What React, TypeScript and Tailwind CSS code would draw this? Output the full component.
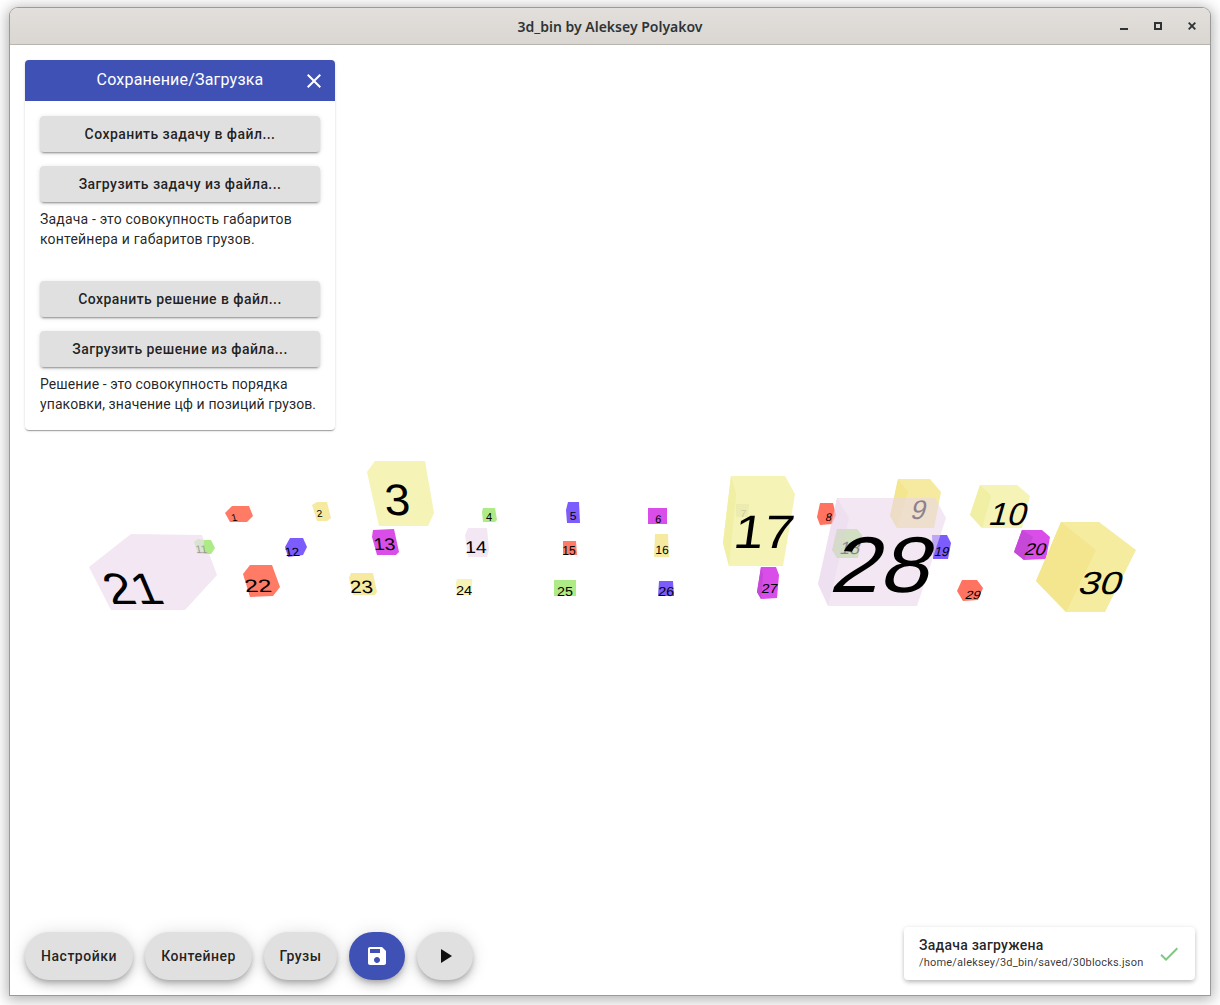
import React from 'react';

const RED = '#ff7b66';
const YEL = '#f5ea9f';
const PALE = '#f5f3b5';
const PALE_SIDE = '#f0efa4';
const GREEN = '#aeea85';
const VIOLET = '#7c5cfc';
const PINK = '#d94de8';
const LILAC = '#f2e7f3';

type Face = { pts: string; fill: string; opacity?: number };
type Label = { n: string; x: number; y: number; size: number; skew?: number; sx?: number; fill?: string };
type Block = { faces: Face[]; label?: Label };

// blocks are drawn in this order, the ones behind the see-through boxes go first
const blocks: Block[] = [
  { faces: [{ pts: '131,534 202,535 217,575 185,610 111,610 89,567', fill: LILAC }], label: { n: '21', x: 139, y: 604, size: 44, skew: 23, sx: 1.12 } },
  { faces: [{ pts: '204,540 211,540 215,548 211,554 204,554', fill: GREEN }, { pts: '194,542 198,539 204,540 204,554 198,554', fill: '#d9e4d0' }], label: { n: '11', x: 202, y: 553, size: 11, skew: 10, fill: '#9b9b9b' } },
  { faces: [{ pts: '232,506 249,506 253,516 247,522 230,522 225,513', fill: RED }], label: { n: '1', x: 235, y: 521, size: 10, skew: 14 } },
  { faces: [{ pts: '312,505 317,502 327,502 331,518 327,521 317,521', fill: YEL }], label: { n: '2', x: 320, y: 517, size: 10, skew: 8 } },
  { faces: [{ pts: '367,472 375,461 425,461 434,513 428,526 379,526', fill: PALE }], label: { n: '3', x: 398, y: 515, size: 44, skew: 3, sx: 1.05 } },
  { faces: [{ pts: '483,508 495,508 497,520 495,522 483,522 482,512', fill: GREEN }], label: { n: '4', x: 489, y: 521, size: 11 } },
  { faces: [{ pts: '568,502 579,502 580,523 567,523 566,510', fill: VIOLET }], label: { n: '5', x: 573, y: 520, size: 11, sx: 1.1 } },
  { faces: [{ pts: '648,508 667,508 667,524 648,524', fill: PINK }], label: { n: '6', x: 658, y: 523, size: 11, skew: -3 } },
  { faces: [{ pts: '731,476 785,476 795,494 783,566 729,566 723,543', fill: PALE }, { pts: '731,476 736,494 729,566 723,543', fill: PALE_SIDE }, { pts: '736,504 749,504 748,517 736,517', fill: '#ecebb0' }], label: { n: '7', x: 743, y: 517, size: 10, skew: -6, fill: '#c9c8a0' } },
  { faces: [{ pts: '820,503 833,503 836,515 832,524 820,525 817,517', fill: '#ff7360' }], label: { n: '8', x: 828, y: 521, size: 11, skew: -12 } },
  { faces: [{ pts: '898,479 930,479 941,492 934,528 897,528 890,516', fill: YEL }, { pts: '898,479 908,492 897,528 890,516', fill: '#f3e68f' }], label: { n: '9', x: 917, y: 519, size: 27, skew: -14 } },
  { faces: [{ pts: '837,529 857,529 862,535 858,558 837,558 832,550', fill: GREEN }], label: { n: '18', x: 849, y: 554, size: 18, skew: -14 } },
  { faces: [{ pts: '932,535 947,535 951,543 948,559 933,559', fill: VIOLET }], label: { n: '19', x: 941, y: 556, size: 13, skew: -14 } },
  { faces: [{ pts: '837,498 935,498 946,518 917,606 828,606 818,584', fill: '#e9d7eb', opacity: 0.6 }, { pts: '837,498 849,518 828,606 818,584', fill: '#e3cde8', opacity: 0.25 }], label: { n: '28', x: 878, y: 592, size: 79, skew: -15, sx: 1.13 } },
  { faces: [{ pts: '980,485 1017,485 1030,496 1022,528 982,528 970,515', fill: PALE }, { pts: '980,485 991,496 982,528 970,515', fill: PALE_SIDE }], label: { n: '10', x: 1006, y: 525, size: 32, skew: -16, sx: 1.05 } },
  { faces: [{ pts: '1022,530 1042,530 1050,537 1046,559 1024,560 1014,552', fill: PINK }, { pts: '1022,530 1033,537 1024,560 1014,552', fill: '#c648d8' }], label: { n: '20', x: 1034, y: 555, size: 17, skew: -18, sx: 1.12 } },
  { faces: [{ pts: '290,538 303,538 307,547 303,555 288,557 285,547', fill: VIOLET }], label: { n: '12', x: 293, y: 556, size: 12, skew: 12, sx: 1.1 } },
  { faces: [{ pts: '373,530 394,529 399,552 396,555 377,555 372,537', fill: PINK }], label: { n: '13', x: 385, y: 550, size: 17, skew: 6, sx: 1.15 } },
  { faces: [{ pts: '468,528 487,528 489,550 487,557 468,557 465,535', fill: LILAC }], label: { n: '14', x: 476, y: 553, size: 17, skew: 2, sx: 1.15 } },
  { faces: [{ pts: '563,541 576,541 577,555 563,555', fill: RED }], label: { n: '15', x: 569, y: 555, size: 12 } },
  { faces: [{ pts: '655,534 668,534 669,557 654,557', fill: YEL }], label: { n: '16', x: 662, y: 554, size: 12, skew: -2 } },
  { faces: [], label: { n: '17', x: 762, y: 548, size: 47, skew: -8, sx: 1.15 } },
  { faces: [{ pts: '250,565 272,565 280,587 273,596 250,597 243,574', fill: RED }], label: { n: '22', x: 259, y: 592, size: 18, skew: 8, sx: 1.35 } },
  { faces: [{ pts: '351,573 373,573 377,592 375,595 353,595 349,578', fill: YEL }], label: { n: '23', x: 362, y: 593, size: 18, skew: 5, sx: 1.15 } },
  { faces: [{ pts: '457,579 472,579 472,595 457,596 456,583', fill: PALE }], label: { n: '24', x: 464, y: 595, size: 13, sx: 1.12 } },
  { faces: [{ pts: '554,580 576,580 576,596 554,596', fill: GREEN }], label: { n: '25', x: 565, y: 596, size: 13, sx: 1.1 } },
  { faces: [{ pts: '659,581 673,581 674,596 658,596', fill: VIOLET }], label: { n: '26', x: 666, y: 596, size: 13, skew: -3, sx: 1.1 } },
  { faces: [{ pts: '761,567 776,567 779,575 777,598 761,599 757,592', fill: PINK }, { pts: '761,567 763,575 761,599 757,592', fill: '#c648d8' }], label: { n: '27', x: 769, y: 593, size: 13, skew: -8, sx: 1.12 } },
  { faces: [{ pts: '962,580 977,580 983,588 978,600 963,601 957,591', fill: '#ff7360' }], label: { n: '29', x: 972, y: 599, size: 12, skew: -18, sx: 1.12 } },
  { faces: [{ pts: '1061,522 1099,522 1136,550 1105,612 1066,612 1036,581', fill: '#f5ec9f' }, { pts: '1061,522 1096,550 1066,612 1036,581', fill: '#f3e68f' }], label: { n: '30', x: 1098, y: 594, size: 32, skew: -18, sx: 1.2 } },
];

const Scene = () => (
  <svg viewBox="10 45 1200 950" className="absolute inset-0 h-full w-full font-['Liberation_Sans',sans-serif]">
    {blocks.map((b, i) => (
      <g key={i}>
        {b.faces.map((f, j) => (
          <polygon key={j} points={f.pts} fill={f.fill} opacity={f.opacity} />
        ))}
        {b.label && (
          <text
            transform={`translate(${b.label.x} ${b.label.y}) skewX(${b.label.skew ?? 0}) scale(${b.label.sx ?? 1} 1)`}
            textAnchor="middle"
            fontSize={b.label.size}
            fill={b.label.fill ?? '#000'}
          >
            {b.label.n}
          </text>
        )}
      </g>
    ))}
  </svg>
);

const PanelButton = ({ children }: { children: React.ReactNode }) => (
  <button className="h-9 w-full rounded bg-[#e0e0e0] text-sm font-medium tracking-[0.44px] text-[rgba(0,0,0,0.87)] shadow-[0_3px_1px_-2px_rgba(0,0,0,0.2),0_2px_2px_0_rgba(0,0,0,0.14),0_1px_5px_0_rgba(0,0,0,0.12)]">
    {children}
  </button>
);

const fabShadow = 'shadow-[0_3px_5px_-1px_rgba(0,0,0,0.2),0_6px_10px_0_rgba(0,0,0,0.14),0_1px_18px_0_rgba(0,0,0,0.12)]';

const Pill = ({ children, className }: { children: React.ReactNode; className: string }) => (
  <button className={`h-12 rounded-full bg-[#e0e0e0] text-sm font-medium tracking-[0.5px] text-[rgba(0,0,0,0.87)] ${fabShadow} ${className}`}>
    {children}
  </button>
);

const App: React.FC = () => {
  return (
    <div className="h-[1005px] w-[1220px] overflow-hidden bg-white pl-2.5 pt-2 font-['Roboto',sans-serif]">
      <div className="flex h-[987px] w-[1200px] flex-col rounded-t-lg bg-white shadow-[0_0_0_1px_#9a9a9a,0_2px_14px_3px_rgba(0,0,0,0.3)]">
        <div className="grid h-[37px] shrink-0 grid-cols-[1fr_auto_1fr] items-center rounded-t-lg border-b border-[#b8b4ae] bg-gradient-to-b from-[#e2dfdc] to-[#dad7d2] px-[14px]">
          <div />
          <span className="pt-0.5 font-['Noto_Sans',sans-serif] text-sm font-semibold text-[#2e3436]">3d_bin by Aleksey Polyakov</span>
          <div className="flex items-center justify-end gap-[26px] text-[#2e3436]">
            <svg width="8" height="8" viewBox="0 0 8 8"><rect y="6" width="8" height="2" fill="currentColor" /></svg>
            <svg width="8" height="8" viewBox="0 0 8 8"><path d="M0 0h8v8H0zM2 2v4h4V2z" fill="currentColor" fillRule="evenodd" /></svg>
            <svg width="8" height="8" viewBox="0 0 8 8"><path d="M0.7 0.7L7.3 7.3M7.3 0.7L0.7 7.3" stroke="currentColor" strokeWidth="1.9" /></svg>
          </div>
        </div>

        <div className="relative flex min-h-0 flex-1 flex-col justify-between p-[15px]">
          <Scene />

          <div className="relative w-[310px] rounded bg-white shadow-[0_2px_1px_-1px_rgba(0,0,0,0.2),0_1px_1px_0_rgba(0,0,0,0.14),0_1px_3px_0_rgba(0,0,0,0.12)]">
            <div className="relative flex h-[41px] items-center justify-center rounded-t bg-[#3f51b5] pb-0.5 text-base tracking-[0.2px] text-white">
              Сохранение/Загрузка
              <svg className="absolute right-[9px] top-[9px]" width="24" height="24" viewBox="0 0 24 24" fill="currentColor">
                <path d="M19 6.41L17.59 5 12 10.59 6.41 5 5 6.41 10.59 12 5 17.59 6.41 19 12 13.41 17.59 19 19 17.59 13.41 12z" />
              </svg>
            </div>
            <div className="px-[15px] pb-[16px] pt-[15px] text-sm leading-5 text-[rgba(0,0,0,0.87)]">
              <div className="flex flex-col gap-[14px]">
                <PanelButton>Сохранить задачу в файл...</PanelButton>
                <PanelButton>Загрузить задачу из файла...</PanelButton>
              </div>
              <p className="mt-[7px] tracking-[0.2px]">Задача - это совокупность габаритов контейнера и габаритов грузов.</p>
              <div className="mt-[32px] flex flex-col gap-[14px]">
                <PanelButton>Сохранить решение в файл...</PanelButton>
                <PanelButton>Загрузить решение из файла...</PanelButton>
              </div>
              <p className="mt-[7px] tracking-[0.1px]">Решение - это совокупность порядка упаковки, значение цф и позиций грузов.</p>
            </div>
          </div>

          <div className="relative flex items-end justify-between">
            <div className="flex gap-3">
              <Pill className="w-[108px]">Настройки</Pill>
              <Pill className="w-[107px]">Контейнер</Pill>
              <Pill className="w-[73px]">Грузы</Pill>
              <button className={`flex h-12 w-14 items-center justify-center rounded-full bg-[#3f51b5] text-white ${fabShadow}`}>
                <svg width="24" height="24" viewBox="0 0 24 24" fill="currentColor">
                  <path d="M17 3H5c-1.11 0-2 .9-2 2v14c0 1.1.89 2 2 2h14c1.1 0 2-.9 2-2V7l-4-4zm-5 16c-1.66 0-3-1.34-3-3s1.34-3 3-3 3 1.34 3 3-1.34 3-3 3zm3-10H5V5h10v4z" />
                </svg>
              </button>
              <button className={`flex h-12 w-14 items-center justify-center rounded-full bg-[#e0e0e0] text-[#111] ${fabShadow}`}>
                <svg width="24" height="24" viewBox="0 0 24 24" fill="currentColor"><path d="M8 5v14l11-7z" /></svg>
              </button>
            </div>

            <div className="flex h-[53px] w-[291px] items-center justify-between rounded bg-white pb-0.5 pl-[15px] pr-[14px] shadow-[0_3px_5px_-1px_rgba(0,0,0,0.2),0_1px_5px_0_rgba(0,0,0,0.14)]">
              <div>
                <div className="text-sm font-medium leading-5 tracking-[0.25px] text-[rgba(0,0,0,0.87)]">Задача загружена</div>
                <div className="text-[11px] leading-4 tracking-[0.2px] text-[rgba(0,0,0,0.8)]">/home/aleksey/3d_bin/saved/30blocks.json</div>
              </div>
              <svg className="mt-0.5" width="24" height="24" viewBox="0 0 24 24" fill="#81c784">
                <path d="M9 16.17L4.83 12l-1.42 1.41L9 19 21 7l-1.41-1.41z" />
              </svg>
            </div>
          </div>
        </div>
      </div>
    </div>
  );
};

export default App;
